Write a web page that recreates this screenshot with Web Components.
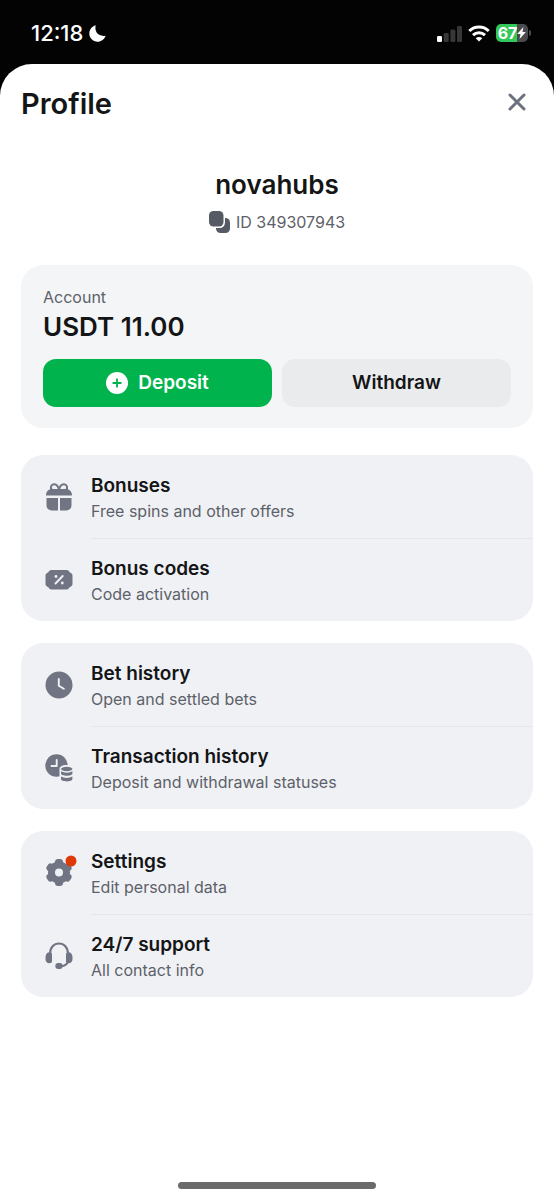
<!DOCTYPE html>
<html lang="en">
<head>
<meta charset="utf-8">
<meta name="viewport" content="width=device-width, initial-scale=1">
<title>Profile</title>
<style>
html { background: #030303; }
body {
  margin: 0; min-height: 100vh; display: flex; flex-direction: column;
  font-family: Inter, "Liberation Sans", sans-serif; color: #141516;
  --muted: #5d6169; --icon: #717583; --card: #f0f1f5;
}
</style>
</head>
<body>
<status-bar time="12:18" level="67"></status-bar>
<profile-sheet heading="Profile">
  <user-summary name="novahubs" uid="349307943"></user-summary>
  <account-card label="Account" balance="USDT 11.00"></account-card>
  <menu-group>
    <menu-row icon="gift" heading="Bonuses">Free spins and other offers</menu-row>
    <menu-row icon="ticket" heading="Bonus codes">Code activation</menu-row>
  </menu-group>
  <menu-group>
    <menu-row icon="clock" heading="Bet history">Open and settled bets</menu-row>
    <menu-row icon="transactions" heading="Transaction history">Deposit and withdrawal statuses</menu-row>
  </menu-group>
  <menu-group>
    <menu-row icon="gear" heading="Settings" badge>Edit personal data</menu-row>
    <menu-row icon="headset" heading="24/7 support">All contact info</menu-row>
  </menu-group>
</profile-sheet>

<script>
const attach = (host, html) => { host.attachShadow({ mode: 'open' }).innerHTML = html; };

const ICONS = {
  gift: `<path fill="none" stroke="currentColor" stroke-width="2" d="M16 8.500C15 4.500 13 3 10.800 3.200 7.800 3.500 7 7 9 9M16 8.500C17 4.500 19 3 21.200 3.200 24.200 3.500 25 7 23 9"/>
    <path fill="currentColor" d="M9 8h14c3.500 0 6 2.500 6 6.500H3C3 10.500 5.500 8 9 8zM3.500 17H15v12.500H8.500a5 5 0 0 1-5-5zM17 17h11.500v7.500a5 5 0 0 1-5 5H17z"/>`,
  ticket: `<path fill="currentColor" d="M8.500 6h15c1.800 0 2.700 1 3 2.200 1.500.6 3 1.500 3 3.300V20c0 1.800-1.500 2.700-3 3.300-.3 1.200-1.200 2.200-3 2.200h-15c-1.800 0-2.700-1-3-2.200-1.500-.6-3-1.500-3-3.300v-8.500c0-1.800 1.500-2.700 3-3.300C5.800 7 6.700 6 8.500 6z"/>
    <path stroke="var(--card)" stroke-width="1.900" stroke-linecap="round" d="M12.500 19.500l7.200-7.500"/><circle cx="13" cy="12.500" r="1.400" fill="var(--card)"/><circle cx="19.300" cy="19" r="1.400" fill="var(--card)"/>`,
  clock: `<circle cx="16" cy="16" r="13.500" fill="currentColor"/><path fill="none" stroke="var(--card)" stroke-width="1.900" stroke-linecap="round" stroke-linejoin="round" d="M15.800 10v6.800l5 3"/>`,
  transactions: `<circle cx="13.500" cy="13.500" r="11.200" fill="currentColor"/><path fill="none" stroke="var(--card)" stroke-width="1.900" stroke-linecap="round" stroke-linejoin="round" d="M13.700 8v6H8.500"/>
    <path fill="var(--card)" d="M16.500 17c0-2.500 3-4 7.200-4s7.300 1.500 7.300 4v12H16.500z"/>
    <ellipse cx="23.700" cy="17" rx="5.700" ry="2.200" fill="currentColor"/>
    <path fill="currentColor" d="M18 19.200c3 1.900 8.400 1.900 11.400 0v2.400c0 3-11.400 3-11.400 0zM18 24.500c3 1.900 8.400 1.900 11.400 0V27c0 3.200-11.400 3.200-11.400 0z"/>`,
  gear: `<g fill="currentColor"><circle cx="16" cy="15.500" r="11"/><rect x="12" y="2" width="8" height="27" rx="3"/><rect x="12" y="2" width="8" height="27" rx="3" transform="rotate(60 16 15.500)"/><rect x="12" y="2" width="8" height="27" rx="3" transform="rotate(120 16 15.500)"/></g><circle cx="16" cy="15.500" r="4" fill="var(--card)"/>`,
  headset: `<g fill="currentColor"><path d="M2.500 17.500c0-3 1.200-4.700 3.500-5.200 1.600-.3 3 .5 3 2v7.200c0 1.200-1 1.700-2.500 1.700-2.600 0-4-1.800-4-4zM29.500 17.500c0-3-1.200-4.700-3.500-5.200-1.600-.3-3 .5-3 2v7.200c0 1.200 1 1.700 2.500 1.700 2.600 0 4-1.800 4-4z"/><rect x="12.300" y="23" width="7.400" height="6" rx="3"/></g>
    <path fill="none" stroke="currentColor" stroke-width="2.100" d="M7 14C7 7.500 11 3.500 16 3.500s9 4 9 10.500v5.500c0 4.500-3 6.700-7.500 6.700"/>`
};

customElements.define('status-bar', class extends HTMLElement {
  connectedCallback() {
    attach(this, `<style>
      :host { display: flex; align-items: center; justify-content: space-between; height: 64px; box-sizing: border-box; padding: 2px 23px 0 31px; color: #fff; }
      div { display: flex; align-items: center; }
      .time { font-size: 22px; font-weight: 500; line-height: 24px; gap: 6px; }
      .right { gap: 6px; }
      svg { display: block; }
      .battery { gap: 1px; }
      .cell { width: 32px; height: 18px; border-radius: 5px; background: linear-gradient(90deg, #34c759 0 66%, #4b4b4d 66%); font-size: 16px; font-weight: 700; line-height: 18px; justify-content: center; }
      .cap { width: 2px; height: 6px; border-radius: 0 2px 2px 0; background: #4b4b4d; }
    </style>
    <div class="time"><span>${this.getAttribute('time')}</span>
      <svg width="17" height="17" viewBox="0 0 17 17" aria-hidden="true"><path fill="#fff" d="M6.700.3C5.200 6.500 9.300 12 16.700 10.700 15.300 14.300 12.200 16.700 8.500 16.700 4 16.700.300 13 .300 8.500.300 4.800 3 1.300 6.700.3z"/></svg></div>
    <div class="right">
      <svg width="25" height="17" viewBox="0 0 25 17" aria-hidden="true"><rect y="11" width="5" height="6" rx="1.300" fill="#fff"/><g fill="#373737"><rect x="6.700" y="8" width="5" height="9" rx="1.300"/><rect x="13.400" y="4.500" width="5" height="12.500" rx="1.300"/><rect x="20" y="1" width="5" height="16" rx="1.300"/></g></svg>
      <svg width="22" height="17" viewBox="0 0 22 17" aria-hidden="true"><g fill="none" stroke="#fff" stroke-width="3"><path d="M1.300 6c5.500-5.200 13.900-5.200 19.400 0"/><path d="M5 10.200c3.400-3.200 8.600-3.200 12 0"/></g><path fill="#fff" d="M11 16.600l-3.300-3.400c1.900-1.700 4.700-1.700 6.600 0z"/></svg>
      <div class="battery"><div class="cell"><span>${this.getAttribute('level')}</span>
        <svg width="9" height="12" viewBox="0 0 9 12" aria-hidden="true"><path fill="#fff" d="M6.400 0L.2 7h3.300L2.600 12 8.800 5H5.500z"/></svg></div><span class="cap"></span></div>
    </div>`);
  }
});

customElements.define('profile-sheet', class extends HTMLElement {
  connectedCallback() {
    attach(this, `<style>
      :host { flex: 1; display: flex; flex-direction: column; box-sizing: border-box; background: #fff; border-radius: 32px 32px 0 0; padding: 20px 21px 11px; }
      header { display: flex; align-items: flex-start; justify-content: space-between; height: 40px; }
      h1 { margin: 0; font-size: 29px; font-weight: 600; line-height: 40px; }
      button { display: grid; place-items: center; width: 32px; height: 36px; padding: 0; border: 0; background: none; color: #6c7180; }
      main { display: flex; flex-direction: column; gap: 22px; }
      .home { width: 198px; height: 7px; border-radius: 4px; background: #6b6b6b; margin: auto auto 0; }
    </style>
    <header><h1>${this.getAttribute('heading')}</h1>
      <button type="button" aria-label="Close"><svg width="18" height="18" viewBox="0 0 18 18"><path stroke="currentColor" stroke-width="3" stroke-linecap="round" d="M2 2l14 14M16 2L2 16"/></svg></button></header>
    <main><slot></slot></main><div class="home"></div>`);
  }
});

customElements.define('user-summary', class extends HTMLElement {
  connectedCallback() {
    attach(this, `<style>
      :host { display: flex; flex-direction: column; align-items: center; gap: 9px; padding: 45px 0 9px; }
      h2 { margin: 0; font-size: 26px; font-weight: 600; line-height: 32px; }
      button { display: flex; align-items: center; gap: 5px; padding: 0; border: 0; background: none; font: 400 16px/24px Inter, sans-serif; color: var(--muted); }
    </style>
    <h2>${this.getAttribute('name')}</h2>
    <button type="button"><svg width="22" height="22" viewBox="0 0 22 22" aria-hidden="true"><rect x="7" y="7" width="14" height="15" rx="4.500" fill="#555a64"/><rect x="-1.500" y="-1.500" width="17.500" height="18.500" rx="5.500" fill="#fff"/><rect x="0" y="0" width="14.500" height="15.500" rx="4.500" fill="#555a64"/></svg><span>ID ${this.getAttribute('uid')}</span></button>`);
  }
});

customElements.define('account-card', class extends HTMLElement {
  connectedCallback() {
    attach(this, `<style>
      :host { display: block; background: #f3f5f7; border-radius: 22px; padding: 21px 22px; margin-bottom: 5px; }
      p { margin: 0; font-size: 16px; line-height: 22px; color: var(--muted); }
      .sum { font-size: 26px; font-weight: 600; line-height: 38px; color: #141516; }
      .actions { display: grid; grid-template-columns: 1fr 1fr; gap: 10px; margin-top: 13px; }
      button { display: flex; align-items: center; justify-content: center; gap: 10px; height: 48px; padding: 0; border: 0; border-radius: 13px; background: #eaebed; color: #141516; font: 600 19px/24px Inter, sans-serif; }
      .primary { background: #00b34c; color: #fff; }
    </style>
    <p>${this.getAttribute('label')}</p><p class="sum">${this.getAttribute('balance')}</p>
    <div class="actions">
      <button type="button" class="primary"><svg width="22" height="22" viewBox="0 0 22 22" aria-hidden="true"><circle cx="11" cy="11" r="11" fill="#fff"/><path stroke="#00b34c" stroke-width="1.800" stroke-linecap="round" d="M11 7.200v7.600M7.200 11h7.600"/></svg>Deposit</button>
      <button type="button">Withdraw</button>
    </div>`);
  }
});

customElements.define('menu-group', class extends HTMLElement {
  connectedCallback() {
    attach(this, `<style>
      :host { display: block; background: var(--card); border-radius: 22px; overflow: hidden; }
      ::slotted(menu-row:not(:first-child)) { --line: #e5e6ea; }
    </style><slot></slot>`);
  }
});

customElements.define('menu-row', class extends HTMLElement {
  connectedCallback() {
    attach(this, `<style>
      :host { display: block; }
      a { display: flex; align-items: center; gap: 16px; padding-left: 22px; color: inherit; text-decoration: none; }
      svg { flex: none; display: block; overflow: visible; color: var(--icon); }
      .text { flex: 1; padding: 17px 0 15px; border-top: 1px solid var(--line, transparent); display: flex; flex-direction: column; }
      b { font-size: 19px; font-weight: 600; line-height: 26px; }
      span { font-size: 16px; line-height: 24px; color: var(--muted); }
    </style>
    <a href="#"><svg width="32" height="32" viewBox="0 0 32 32" aria-hidden="true">${ICONS[this.getAttribute('icon')]}${this.hasAttribute('badge') ? '<circle cx="28" cy="4" r="5.500" fill="#dd3a05"/>' : ''}</svg>
      <div class="text"><b>${this.getAttribute('heading')}</b><span><slot></slot></span></div></a>`);
  }
});
</script>
</body>
</html>
